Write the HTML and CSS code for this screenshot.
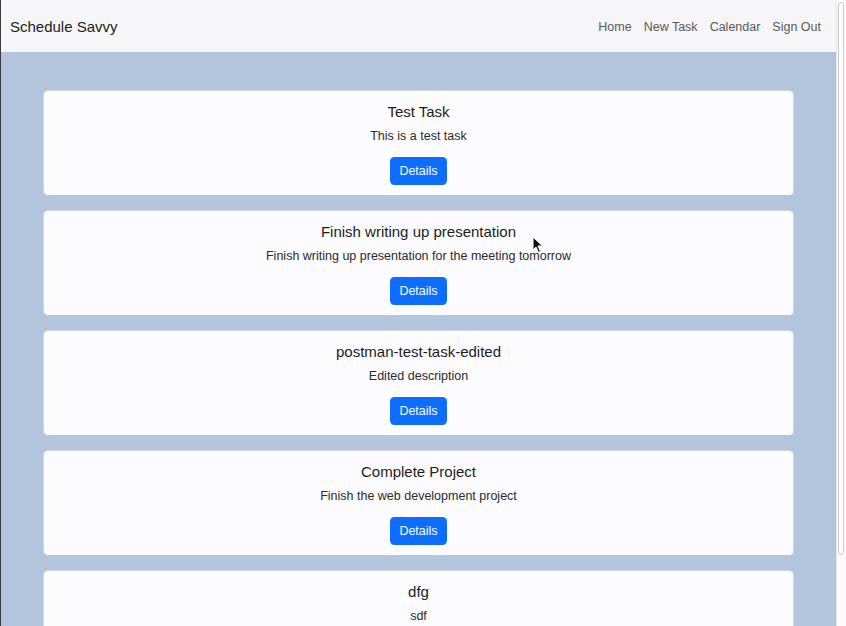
FILE: index.html
```html
<!DOCTYPE html>
<html lang="en">
<head>
<meta charset="utf-8">
<title>Schedule Savvy</title>
<link rel="stylesheet" href="styles.css">
</head>
<body>
<div class="page">
  <nav class="navbar">
    <a class="brand" href="#">Schedule Savvy</a>
    <ul class="nav-links">
      <li><a href="#">Home</a></li>
      <li><a href="#">New Task</a></li>
      <li><a href="#">Calendar</a></li>
      <li><a href="#">Sign Out</a></li>
    </ul>
  </nav>
  <main class="content">
    <div class="card">
      <h5 class="card-title">Test Task</h5>
      <p class="card-text">This is a test task</p>
      <a class="btn" href="#">Details</a>
    </div>
    <div class="card">
      <h5 class="card-title">Finish writing up presentation</h5>
      <p class="card-text">Finish writing up presentation for the meeting tomorrow</p>
      <a class="btn" href="#">Details</a>
    </div>
    <div class="card">
      <h5 class="card-title">postman-test-task-edited</h5>
      <p class="card-text">Edited description</p>
      <a class="btn" href="#">Details</a>
    </div>
    <div class="card">
      <h5 class="card-title">Complete Project</h5>
      <p class="card-text">Finish the web development project</p>
      <a class="btn" href="#">Details</a>
    </div>
    <div class="card">
      <h5 class="card-title">dfg</h5>
      <p class="card-text">sdf</p>
      <a class="btn" href="#">Details</a>
    </div>
  </main>
</div>
<div class="scrollbar"><div class="thumb"></div></div>
<svg class="cursor" width="12" height="18" viewBox="0 0 12 18"><path d="M1 1 L1 14 L4 11 L6.5 16.5 L8.5 15.5 L6 10 L10.5 10 Z" fill="#111" stroke="#fff" stroke-width="1"/></svg>
</body>
</html>
```
FILE: styles.css
```css
html, body {
  margin: 0;
  padding: 0;
  height: 100%;
  overflow: hidden;
}
body {
  font-family: "Liberation Sans", Arial, sans-serif;
  color: #212529;
  background: #b3c4dd;
}
.page {
  width: 835px;
  border-left: 1px solid #3a3a3a;
  min-height: 626px;
}
.navbar {
  height: 52px;
  background: #f6f5f7;
  display: flex;
  align-items: center;
  justify-content: space-between;
  padding: 0 15px 0 9px;
  box-sizing: border-box;
}
.brand {
  color: #1c1c1e;
  text-decoration: none;
  font-size: 15px;
}
.nav-links {
  list-style: none;
  display: flex;
  gap: 12px;
  margin: 0;
  padding: 0;
}
.nav-links a {
  color: #5a5a5c;
  text-decoration: none;
  font-size: 12.5px;
}
.content {
  padding: 38px 42px 0 42px;
  display: flex;
  flex-direction: column;
  gap: 14px;
}
.card {
  background: #fcfbfe;
  border: 1px solid #d3d3d8;
  border-bottom-color: #c4c4c8;
  border-radius: 5px;
  padding: 11px 12px 11px;
  display: flex;
  flex-direction: column;
  align-items: center;
  height: 106px;
  box-sizing: border-box;
}
.card-title {
  margin: 0 0 6px;
  font-size: 15px;
  font-weight: 400;
  line-height: 19px;
  color: #1c1c1e;
}
.card-text {
  margin: 0 0 12px;
  font-size: 12.5px;
  line-height: 18px;
  color: #2a2a2c;
}
.btn {
  display: inline-block;
  background: #0d6efd;
  color: #fff;
  text-decoration: none;
  font-size: 12.5px;
  line-height: 28px;
  height: 28px;
  padding: 0 9px;
  border-radius: 4.5px;
}
.scrollbar {
  position: fixed;
  top: 0;
  right: 0;
  width: 10px;
  height: 626px;
  background: #fbfbfb;
  border-left: 1px solid #e6e6e6;
  box-sizing: border-box;
}
.thumb {
  position: absolute;
  top: 2px;
  left: 1px;
  width: 6px;
  height: 553px;
  border: 1px solid #c9c9c9;
  border-radius: 4px;
  background: #fff;
  box-sizing: border-box;
}
.cursor {
  position: fixed;
  left: 532px;
  top: 236px;
}
```
